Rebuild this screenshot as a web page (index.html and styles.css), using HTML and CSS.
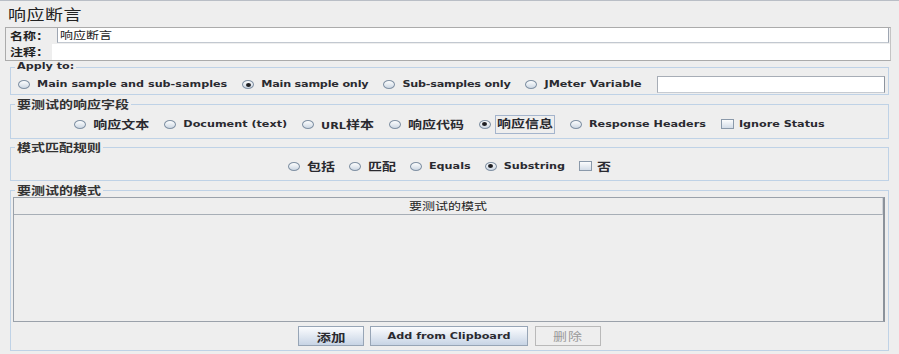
FILE: index.html
```html
<!DOCTYPE html>
<html>
<head>
<meta charset="utf-8">
<link rel="stylesheet" href="styles.css">
</head>
<body>
<div class="page">
  <div class="title"><span class="sq">响应断言</span></div>

  <div class="namebox">
    <div class="nrow nrow1">
      <span class="nlabel n1"><span class="sq">名称：</span></span>
      <div class="ninput"><span class="sq">响应断言</span></div>
    </div>
    <div class="nrow nrow2">
      <span class="nlabel n2"><span class="sq">注释：</span></span>
      <div class="narea"></div>
    </div>
  </div>

  <fieldset class="fs fs1">
    <legend class="lg lg-lat"><span class="sq">Apply to:</span></legend>
    <div class="opts opts-left">
      <label class="opt"><i class="radio"></i><span class="sq">Main sample and sub-samples</span></label>
      <label class="opt"><i class="radio on"></i><span class="sq tight">Main sample only</span></label>
      <label class="opt"><i class="radio"></i><span class="sq tight">Sub-samples only</span></label>
      <label class="opt"><i class="radio"></i><span class="sq">JMeter Variable</span></label>
      <div class="varinput"></div>
    </div>
  </fieldset>

  <fieldset class="fs fs2">
    <legend class="lg lg-cjk"><span class="sq">要测试的响应字段</span></legend>
    <div class="opts opts-center">
      <label class="opt"><i class="radio"></i><span class="sq cjk">响应文本</span></label>
      <label class="opt"><i class="radio"></i><span class="sq">Document (text)</span></label>
      <label class="opt"><i class="radio"></i><span class="sq">URL<span class="cjk">样本</span></span></label>
      <label class="opt"><i class="radio"></i><span class="sq cjk">响应代码</span></label>
      <label class="opt"><i class="radio on"></i><span class="focus"><span class="sq cjk">响应信息</span></span></label>
      <label class="opt"><i class="radio"></i><span class="sq">Response Headers</span></label>
      <label class="opt"><i class="chk"></i><span class="sq">Ignore Status</span></label>
    </div>
  </fieldset>

  <fieldset class="fs fs3">
    <legend class="lg lg-cjk"><span class="sq">模式匹配规则</span></legend>
    <div class="opts opts-center opts3">
      <label class="opt"><i class="radio"></i><span class="sq cjk">包括</span></label>
      <label class="opt"><i class="radio"></i><span class="sq cjk">匹配</span></label>
      <label class="opt"><i class="radio"></i><span class="sq">Equals</span></label>
      <label class="opt"><i class="radio on"></i><span class="sq">Substring</span></label>
      <label class="opt"><i class="chk"></i><span class="sq cjk">否</span></label>
    </div>
  </fieldset>

  <fieldset class="fs fs4">
    <legend class="lg lg-cjk"><span class="sq">要测试的模式</span></legend>
    <div class="tbl">
      <div class="thead"><span class="sq">要测试的模式</span></div>
      <div class="tbody"></div>
    </div>
    <div class="btns">
      <div class="btn b1"><span class="sq cjk">添加</span></div>
      <div class="btn b2"><span class="sq">Add from Clipboard</span></div>
      <div class="btn b3 disabled"><span class="sq cjk">删除</span></div>
    </div>
  </fieldset>
</div>
</body>
</html>
```

FILE: styles.css
```css
* { box-sizing: border-box; }
html, body { margin: 0; padding: 0; }
body {
  background: #eeeeee;
  width: 899px;
  height: 354px;
  overflow: hidden;
  border-top: 1px solid #b9bec6;
  font-family: "DejaVu Sans", "Noto Sans CJK SC", sans-serif;
  font-size: 11.2px;
  font-weight: bold;
  color: #2a2a30;
}
.sq { display: inline-block; transform: scaleY(0.8); white-space: nowrap; }
.tight { letter-spacing: -0.2px; }
.cjk { font-family: "Noto Sans CJK SC", sans-serif; font-size: 14px; }

.title {
  height: 26px;
  padding: 3px 0 0 8px;
  font-family: "Noto Sans CJK SC", sans-serif;
  font-size: 18px;
  font-weight: normal;
  line-height: 20px;
  letter-spacing: 0.5px;
  color: #222;
}

.namebox {
  margin-left: 5px;
  width: 886px;
  height: 34px;
  border: 1px solid #ababab;
  border-right-color: #c4c4c4;
  display: flex;
  flex-direction: column;
}
.nrow { display: flex; align-items: center; }
.nrow1 { height: 15px; }
.nrow2 { height: 17px; }
.nlabel {
  font-family: "Noto Sans CJK SC", sans-serif;
  font-size: 13px;
  line-height: 15px;
  padding-left: 4px;
  color: #222;
}
.n1 { width: 51px; }
.n2 { width: 46px; }
.ninput {
  flex: 1;
  height: 15px;
  margin-right: 1px;
  background: #fff;
  border-left: 1px solid #9ea6b2;
  border-right: 1px solid #9ea6b2;
  border-bottom: 1px solid #c2c8d0;
  font-family: "Noto Sans CJK SC", sans-serif;
  font-size: 13px;
  font-weight: normal;
  line-height: 13px;
  padding-left: 2px;
  color: #222;
}
.narea { flex: 1; height: 16px; background: #fff; }

.fs {
  margin: 0 0 0 10px;
  width: 879px;
  min-width: 0;
  padding: 0;
  border: 1px solid #bfd2e6;
}
.fs1 { margin-top: 0; }
.fs2 { margin-top: 2px; }
.fs3 { margin-top: 1px; }
.fs4 { margin-top: 2px; }

.lg { margin-left: 4px; padding: 0 2px; }
.lg-lat { font-size: 11.2px; line-height: 12px; }
.lg-cjk {
  font-family: "Noto Sans CJK SC", sans-serif;
  font-size: 14px;
  line-height: 14px;
  color: #333;
}

.opts { display: flex; align-items: center; }
.opts-left { height: 17px; margin: 3px 3px 1px 7px; }
.opts-left .opt { margin-right: 15px; }
.opts-center { height: 16px; justify-content: center; gap: 15px; margin: 5px 0 6px; }
.opts3 { margin: 4px 0 6px; gap: 14px; }

.opt { display: flex; align-items: center; white-space: nowrap; }
.radio {
  flex: none;
  position: relative;
  width: 12px;
  height: 9px;
  margin-right: 7px;
  border-radius: 50%;
  border: 1px solid #7f90a3;
  background: linear-gradient(#fdfefe, #cdd7e3);
}
.radio.on::after {
  content: "";
  position: absolute;
  left: 2.5px;
  top: 1.5px;
  width: 5px;
  height: 4px;
  border-radius: 50%;
  background: #1e1e22;
}
.chk {
  flex: none;
  width: 13px;
  height: 10px;
  margin-right: 5px;
  border: 1px solid #8a99aa;
  background: linear-gradient(#fbfcfd, #d3dce7);
}
.focus {
  border: 1px solid #a4b4cc;
  padding: 0 1px;
  line-height: 14px;
  margin-left: -3px;
}
.varinput {
  flex: 1;
  height: 17px;
  background: #fff;
  border: 1px solid #a7adb6;
  border-right-color: #8d949e;
  border-bottom-color: #c6cbd2;
}

.tbl {
  margin: 0 3px 0 2px;
  height: 125px;
  border: 1px solid #9aa1aa;
  border-right: 2px solid #8b929b;
  background: #eeeeee;
}
.thead {
  height: 17px;
  border-bottom: 1px solid #a7aeb6;
  border-right: 1px solid #cfd3d8;
  text-align: center;
  font-family: "Noto Sans CJK SC", sans-serif;
  font-size: 13px;
  font-weight: normal;
  line-height: 16px;
  color: #222;
}

.btns { display: flex; justify-content: center; gap: 6px; margin: 4px 0 4px; }
.btn {
  height: 20px;
  border: 1px solid #97a5b6;
  background: linear-gradient(#fbfcfe, #c7d4e5);
  display: flex;
  align-items: center;
  justify-content: center;
  color: #2a2a30;
}
.b1 { width: 66px; }
.b2 { width: 158px; }
.b3 { width: 66px; margin-left: 1px; }
.btn.disabled {
  border-color: #b9b9b9;
  background: #eeeeee;
  color: #9a9a9a;
  font-weight: normal;
}
.btn.disabled .cjk { font-size: 14px; letter-spacing: 1px; }
.b1 .cjk { font-size: 14.5px; }
```
